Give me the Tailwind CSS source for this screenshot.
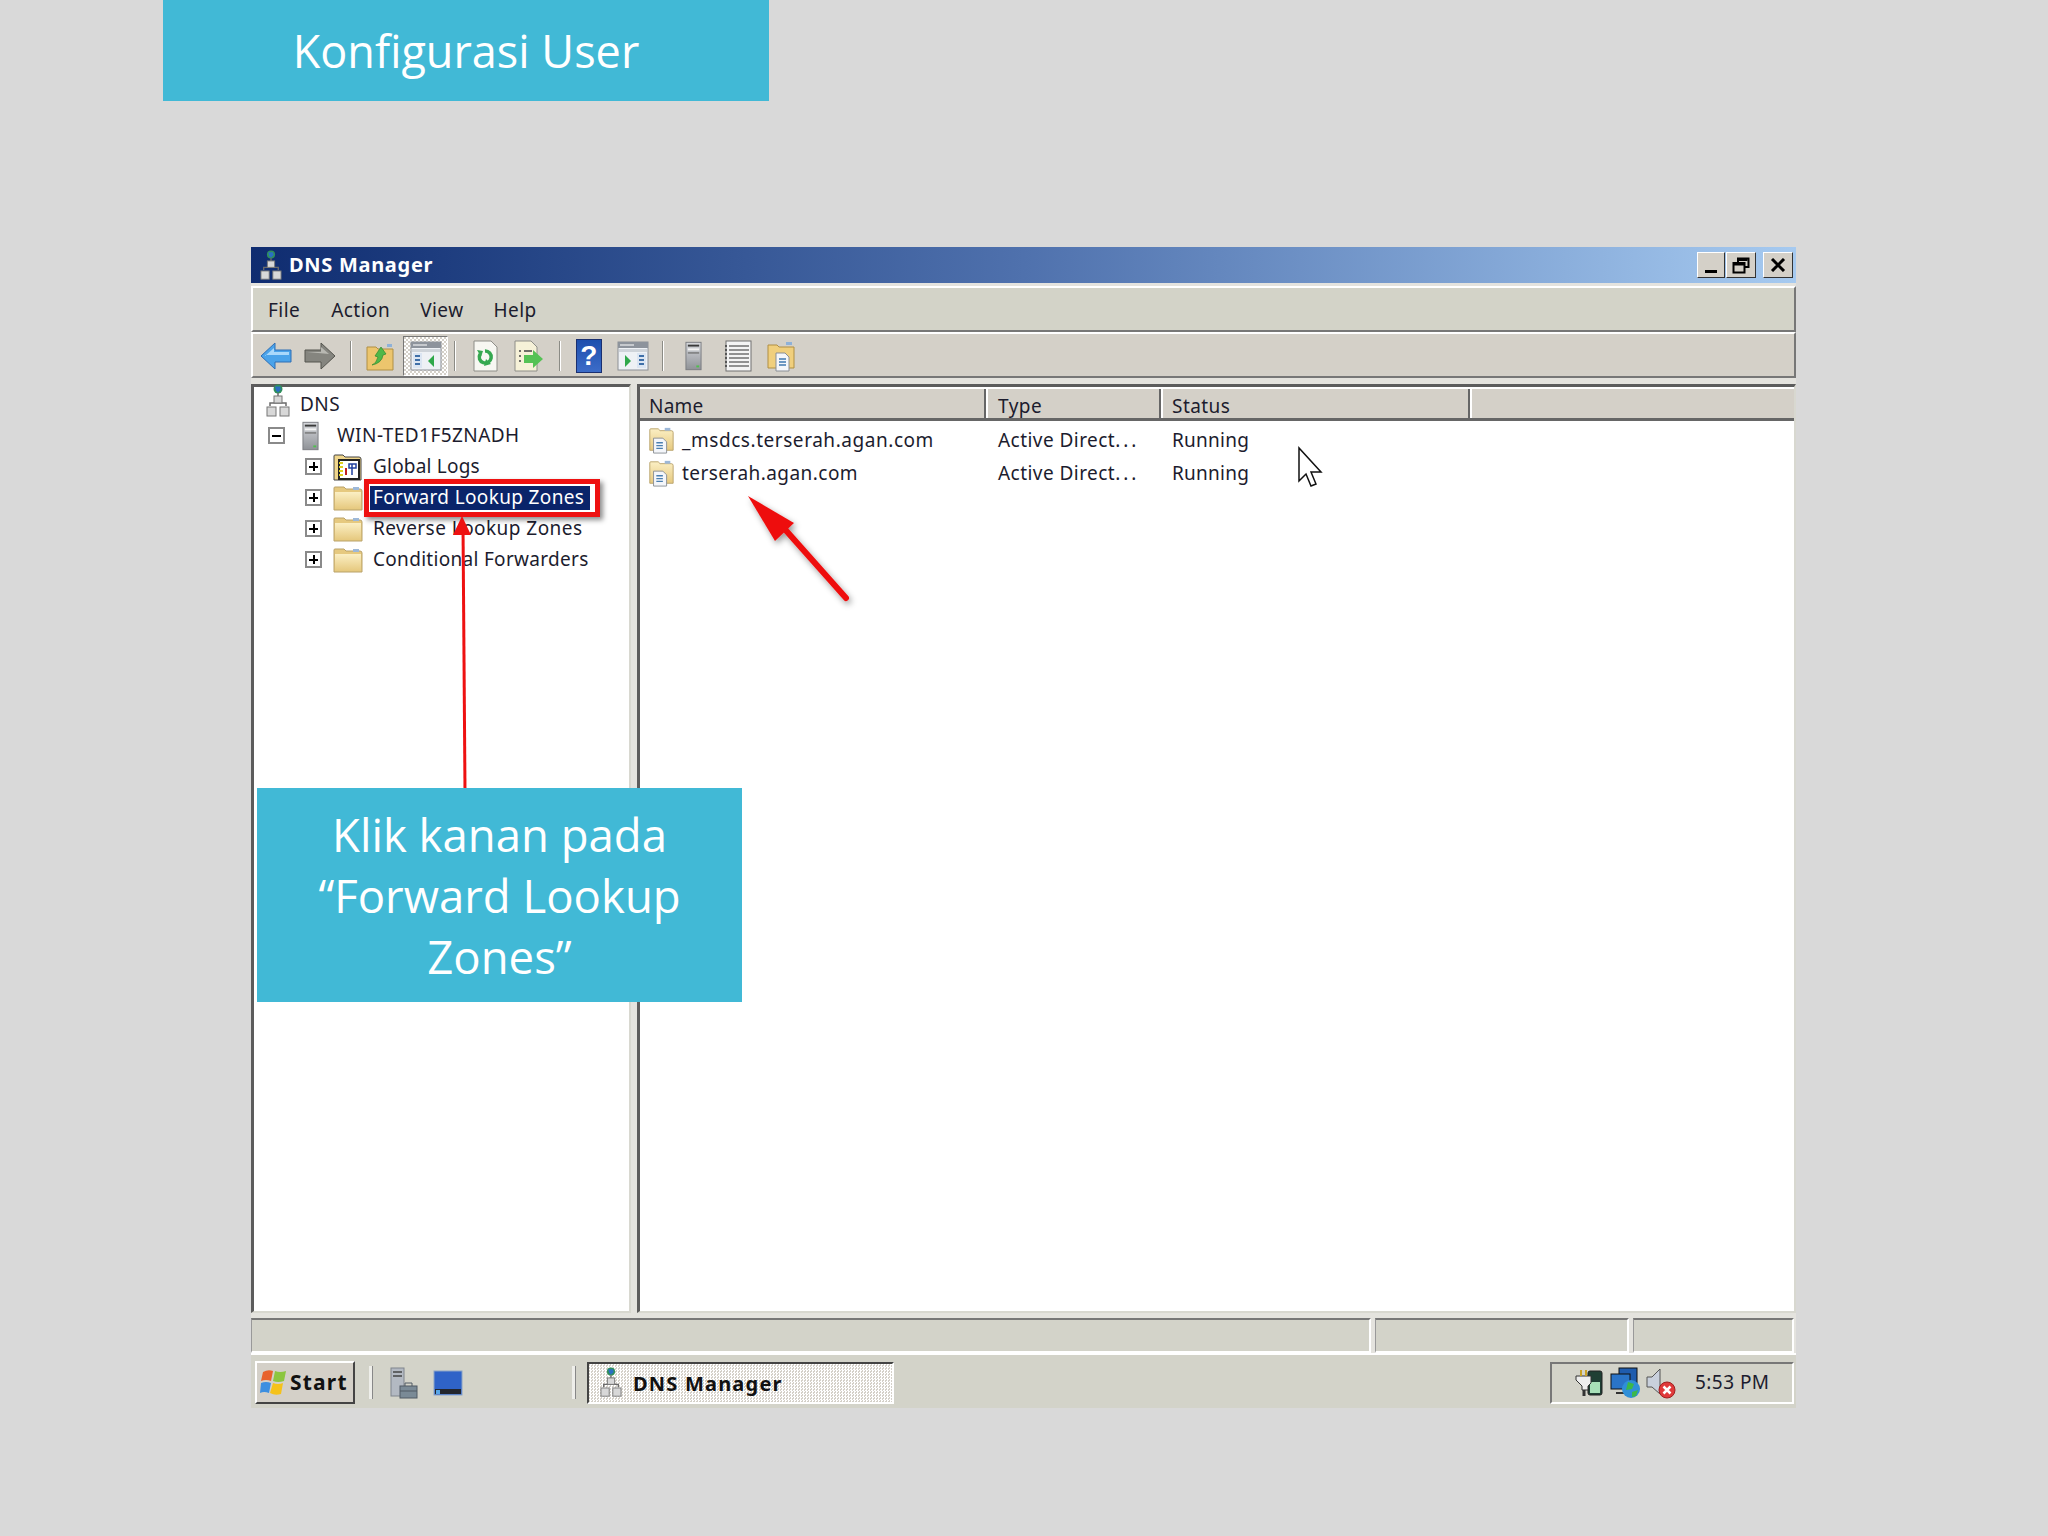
<!DOCTYPE html>
<html lang="en">

<head>
  <meta charset="UTF-8">
  <title>Konfigurasi User</title>
  <script src="https://cdn.jsdelivr.net/npm/@tailwindcss/browser@4"></script>
</head>

<body class="bg-[#d9d9d9] font-['Noto_Sans',sans-serif]">
  <!-- shared icons -->
  <svg width="0" height="0" class="absolute">
    <defs>
      <linearGradient id="fold" x1="0" y1="0" x2="0" y2="1">
        <stop offset="0" stop-color="#fbefc4" />
        <stop offset="1" stop-color="#e6c97f" />
      </linearGradient>
      <linearGradient id="tower" x1="0" y1="0" x2="0" y2="1">
        <stop offset="0" stop-color="#d6d8dc" />
        <stop offset="1" stop-color="#8f9297" />
      </linearGradient>
      <symbol id="dns" viewBox="0 0 24 34">
        <circle cx="12" cy="5" r="4.500" fill="#2f8f5b" />
        <path d="M9 2.500h5l1 3-3 3-2-2z" fill="#2a6fc4" />
        <path d="M12 9v5M4 22v-3h16v3M12 14v5" stroke="#6b6b6b" stroke-width="1.500" fill="none" />
        <rect x="8" y="12" width="8" height="7" fill="#d8d8d8" stroke="#777" />
        <rect x="1" y="23" width="9" height="9" fill="#d8d8d8" stroke="#777" />
        <rect x="14" y="23" width="9" height="9" fill="#d8d8d8" stroke="#777" />
      </symbol>
      <symbol id="server" viewBox="0 0 18 30">
        <rect x="1" y="0.500" width="16" height="29" fill="url(#tower)" stroke="#7a7c80" />
        <rect x="3" y="3" width="12" height="2" fill="#3a3a3a" />
        <rect x="3" y="7" width="12" height="2" fill="#f4f4f4" />
        <rect x="3" y="11" width="12" height="1.500" fill="#777" />
        <rect x="12" y="25" width="3" height="2" fill="#4ec04e" />
      </symbol>
      <symbol id="folder" viewBox="0 0 30 26">
        <path d="M1 25V3q0-1 1-1h9l2 2h14q2 0 2 2v19z" fill="#e6c97f" stroke="#b9a26a" />
        <path d="M2 7h26v17H2z" fill="url(#fold)" />
        <rect x="20" y="2" width="6" height="3" fill="#9db8d8" />
      </symbol>
      <symbol id="zone" viewBox="0 0 30 30">
        <path d="M3 26V4q0-1 1-1h8l2 2h12q2 0 2 2v19z" fill="url(#fold)" stroke="#b9a26a" />
        <rect x="19" y="2" width="6" height="3" fill="#9db8d8" />
        <path d="M7 13h10l4 4v12H7z" fill="#f4f6fa" stroke="#8a8f96" />
        <path d="M10 18h7M10 21h7M10 24h7" stroke="#4a7fb0" stroke-width="1.500" />
      </symbol>
      <symbol id="pane" viewBox="0 0 32 30">
        <rect x="1" y="1" width="30" height="28" fill="#eef1f5" stroke="#8b8f96" />
        <rect x="1" y="1" width="30" height="6" fill="#8d939c" />
        <path d="M3 4h14" stroke="#fff" />
        <rect x="2" y="8" width="28" height="3" fill="#cfd4da" />
      </symbol>
    </defs>
  </svg>

  <div class="relative w-[2048px] h-[1536px] overflow-hidden">
    <!-- slide title -->
    <div class="ml-[163px] w-[606px] h-[101px] bg-[#41b9d6] flex items-center justify-center text-white text-[45px] font-['Open_Sans',sans-serif]">
      Konfigurasi User</div>

    <!-- DNS Manager window -->
    <div class="ml-[251px] mt-[146px] w-[1545px] h-[1161px] flex flex-col bg-[#e4e3de] text-[#1c1c2e] text-[19px] tracking-[0.45px]">
      <div class="h-[36px] shrink-0 flex items-center bg-gradient-to-r from-[#0f2c70] via-[#4f71ad] to-[#a6caf0]">
        <svg class="ml-[9px] w-[22px] h-[31px]"><use href="#dns" /></svg>
        <span class="ml-[7px] text-white font-bold text-[20px] tracking-[0.7px]">DNS Manager</span>
        <div class="ml-auto mr-[3px] flex gap-[3px]">
          <div class="w-[28px] h-[26px] bg-[#d4d0c8] border border-t-white border-l-white border-r-[#333] border-b-[#333] flex items-end justify-center pb-[4px]">
            <div class="w-[12px] h-[3px] bg-black"></div>
          </div>
          <div class="w-[30px] h-[26px] -ml-[2px] bg-[#d4d0c8] border border-t-white border-l-white border-r-[#333] border-b-[#333] flex items-center justify-center">
            <svg width="18" height="17" viewBox="0 0 18 17" fill="none" stroke="#000" stroke-width="2">
              <path d="M6 5V1.500h10.500V10H13" />
              <path d="M5.500 2.500h10" stroke-width="3" />
              <rect x="1.500" y="6" width="11" height="9.500" />
              <path d="M1.500 7h11" stroke-width="3" />
            </svg>
          </div>
          <div class="ml-[4px] w-[30px] h-[26px] bg-[#d4d0c8] border border-t-white border-l-white border-r-[#333] border-b-[#333] flex items-center justify-center">
            <svg width="16" height="14" viewBox="0 0 16 14" stroke="#000" stroke-width="3" fill="none">
              <path d="M2 1l12 12M14 1L2 13" />
            </svg>
          </div>
        </div>
      </div>

      <!-- menu bar -->
      <div class="mt-[3px] h-[46px] shrink-0 flex items-center pt-[2px] bg-[#d3d3c8] border-t-2 border-t-white border-b-2 border-b-[#777] border-l-2 border-l-white border-r-2 border-r-[#777]">
        <span class="ml-[15px]">File</span>
        <span class="ml-[31px]">Action</span>
        <span class="ml-[30px]">View</span>
        <span class="ml-[30px]">Help</span>
      </div>

      <!-- toolbar -->
      <div class="h-[46px] shrink-0 flex items-center pt-[2px] bg-[#d4d0c8] border-t-2 border-t-white border-b-2 border-b-[#777] border-l-2 border-l-white border-r-2 border-r-[#777]">
        <svg class="ml-[7px]" width="32" height="28" viewBox="0 0 32 28">
          <path d="M1 14L15 1v7h16v12H15v7z" fill="#4aa3ea" stroke="#2f6fb5" />
          <path d="M5 14L14 6v4h15v3H5z" fill="#a9d8fb" />
        </svg>
        <svg class="ml-[12px]" width="32" height="28" viewBox="0 0 32 28">
          <path d="M31 14L17 1v7H1v12h16v7z" fill="#85857f" stroke="#55554f" />
          <path d="M3 10h14V5l8 7z" fill="#b8b8b2" />
        </svg>
        <div class="ml-[14px] w-[2px] h-[30px] bg-[#8b8b85] border-r border-white"></div>
        <svg class="ml-[14px]" width="28" height="30" viewBox="0 0 28 30">
          <path d="M1 29V6h9l2 2h15v21z" fill="#ecc56d" stroke="#b08f45" />
          <path d="M6 24q4-1 6-8l-3-1 6-9 5 7-3 1q-1 8-11 10z" fill="#4fb848" stroke="#2c8a2c" stroke-width="0.700" />
          <rect x="21" y="3" width="5" height="3" fill="#8eb1d8" />
        </svg>
        <div class="ml-[9px] w-[45px] h-[40px] flex items-center justify-center border border-t-[#777] border-l-[#777] border-r-white border-b-white bg-[repeating-conic-gradient(#ffffff_0_25%,#d4d0c8_0_50%)] bg-[length:4px_4px]">
          <svg width="32" height="30" viewBox="0 0 32 30">
            <use href="#pane" />
            <rect x="3" y="12" width="9" height="15" fill="#dbe5f2" />
            <path d="M5 15h5M5 19h5M5 23h5" stroke="#3f6fa8" stroke-width="2" />
            <path d="M24 14v12l-6-6z" fill="#2fa84a" />
          </svg>
        </div>
        <div class="ml-[6px] w-[2px] h-[30px] bg-[#8b8b85] border-r border-white"></div>
        <svg class="ml-[17px]" width="25" height="32" viewBox="0 0 25 32">
          <path d="M1 1h17l6 6v24H1z" fill="#f7f7f2" stroke="#8e8e88" />
          <path d="M12 11a6 6 0 1 1-5 3" fill="none" stroke="#35a850" stroke-width="3.500" />
          <path d="M4 10l6 1-2 6zM11 26l2-7 5 5z" fill="#35a850" />
        </svg>
        <svg class="ml-[16px]" width="31" height="32" viewBox="0 0 31 32">
          <path d="M1 1h16l6 6v24H1z" fill="#f6f1d8" stroke="#8e8e88" />
          <path d="M5 11h2M5 16h2M5 21h2M10 11h8" stroke="#444" stroke-width="1.500" />
          <path d="M10 15h9v-5l10 9-10 9v-5h-9z" fill="#55c255" />
        </svg>
        <div class="ml-[14px] w-[2px] h-[30px] bg-[#8b8b85] border-r border-white"></div>
        <div class="ml-[15px] w-[26px] h-[34px] bg-gradient-to-b from-[#1d4fae] to-[#3c6cc8] border border-[#1a2f70] flex items-center justify-center text-white font-bold text-[28px] leading-none font-['Liberation_Sans',sans-serif]">?</div>
        <svg class="ml-[15px]" width="32" height="30" viewBox="0 0 32 30">
          <use href="#pane" />
          <rect x="20" y="12" width="9" height="15" fill="#dbe5f2" />
          <path d="M22 15h5M22 19h5M22 23h5" stroke="#3f6fa8" stroke-width="2" />
          <path d="M8 14v12l6-6z" fill="#2fa84a" />
        </svg>
        <div class="ml-[13px] w-[2px] h-[30px] bg-[#8b8b85] border-r border-white"></div>
        <svg class="ml-[21px] w-[17px] h-[34px]"><use href="#server" /></svg>
        <svg class="ml-[22px]" width="28" height="32" viewBox="0 0 28 32">
          <rect x="2" y="1" width="25" height="30" fill="#f4f4f4" stroke="#707070" />
          <path d="M5 6h20M5 10h20M5 14h20M5 18h20M5 22h20M5 26h20" stroke="#707070" stroke-width="1.500" />
          <path d="M2 5v24" stroke="#555" stroke-width="2" stroke-dasharray="2 2" />
        </svg>
        <svg class="ml-[15px]" width="28" height="32" viewBox="0 0 28 32">
          <path d="M1 28V5h9l2 2h15v21z" fill="#f0cf7d" stroke="#b08f45" />
          <rect x="19" y="2" width="6" height="3" fill="#8eb1d8" />
          <path d="M9 13h9l4 4v14H9z" fill="#f4f6fa" stroke="#8a8f96" />
          <path d="M12 19h7M12 22h7M12 25h7" stroke="#3f78b0" stroke-width="1.500" />
        </svg>
      </div>

      <!-- panes -->
      <div class="mt-[6px] h-[929px] shrink-0 flex gap-[6px]">
        <div class="w-[380px] bg-white border-t-[3px] border-t-[#5c5c5c] border-l-[3px] border-l-[#5c5c5c] border-b-2 border-b-[#d8d8d0] border-r-2 border-r-[#d8d8d0] pt-[2px]">
          <div class="h-[31px] flex items-center">
            <svg class="ml-[12px] w-[24px] h-[34px] -mt-[8px]"><use href="#dns" /></svg>
            <span class="ml-[10px]">DNS</span>
          </div>
          <div class="h-[31px] flex items-center">
            <div class="ml-[14px] w-[17px] h-[17px] border-2 border-[#8a8a8a] flex items-center justify-center">
              <div class="w-[9px] h-[2px] bg-black"></div>
            </div>
            <svg class="ml-[17px] w-[17px] h-[30px]"><use href="#server" /></svg>
            <span class="ml-[18px]">WIN-TED1F5ZNADH</span>
          </div>
          <div class="h-[31px] flex items-center">
            <div class="relative ml-[51px] w-[17px] h-[17px] border-2 border-[#8a8a8a] flex items-center justify-center">
              <div class="w-[9px] h-[2px] bg-black"></div>
              <div class="absolute w-[2px] h-[9px] bg-black"></div>
            </div>
            <svg class="ml-[11px] w-[30px] h-[30px]" viewBox="0 0 30 30">
              <path d="M1 28V4q0-1 1-1h8l2 2h14q2 0 2 2v21z" fill="#f0d68c" stroke="#444" />
              <rect x="6" y="8" width="20" height="19" fill="#fff" stroke="#222" stroke-width="2" />
              <path d="M8 10v15" stroke="#e0d020" stroke-width="4" stroke-dasharray="2 2" />
              <path d="M16 12h7v4h-7zM19 12v11" stroke="#2040a0" stroke-width="1.500" fill="none" />
              <path d="M13 16v7" stroke="#c02020" stroke-width="2" />
            </svg>
            <span class="ml-[10px] tracking-[0.2px]">Global Logs</span>
          </div>
          <div class="h-[31px] flex items-center">
            <div class="relative ml-[51px] w-[17px] h-[17px] border-2 border-[#8a8a8a] flex items-center justify-center">
              <div class="w-[9px] h-[2px] bg-black"></div>
              <div class="absolute w-[2px] h-[9px] bg-black"></div>
            </div>
            <svg class="ml-[11px] w-[30px] h-[26px]"><use href="#folder" /></svg>
            <span class="ml-[7px] pl-[3px] pr-[3px] h-[24px] w-[220px] flex items-center bg-[#0a246a] text-white tracking-[0.35px]">Forward Lookup Zones</span>
          </div>
          <div class="h-[31px] flex items-center">
            <div class="relative ml-[51px] w-[17px] h-[17px] border-2 border-[#8a8a8a] flex items-center justify-center">
              <div class="w-[9px] h-[2px] bg-black"></div>
              <div class="absolute w-[2px] h-[9px] bg-black"></div>
            </div>
            <svg class="ml-[11px] w-[30px] h-[26px]"><use href="#folder" /></svg>
            <span class="ml-[10px]">Reverse Lookup Zones</span>
          </div>
          <div class="h-[31px] flex items-center">
            <div class="relative ml-[51px] w-[17px] h-[17px] border-2 border-[#8a8a8a] flex items-center justify-center">
              <div class="w-[9px] h-[2px] bg-black"></div>
              <div class="absolute w-[2px] h-[9px] bg-black"></div>
            </div>
            <svg class="ml-[11px] w-[30px] h-[26px]"><use href="#folder" /></svg>
            <span class="ml-[10px] tracking-[0.3px]">Conditional Forwarders</span>
          </div>
        </div>

        <div class="flex-1 bg-white border-t-[3px] border-t-[#5c5c5c] border-l-[3px] border-l-[#5c5c5c] border-b-2 border-b-[#d8d8d0] border-r-2 border-r-[#d8d8d0]">
          <div class="h-[34px] flex bg-[#d4d0c8] border-t-2 border-t-white border-b-[3px] border-b-[#666]">
            <div class="w-[346px] pl-[9px] pt-[6px] border-r-2 border-r-[#666] flex items-center tracking-[0.2px]">Name</div>
            <div class="w-[175px] pl-[10px] pt-[6px] border-l-2 border-l-white border-r-2 border-r-[#666] flex items-center">Type</div>
            <div class="w-[309px] pl-[9px] pt-[6px] border-l-2 border-l-white border-r-2 border-r-[#666] flex items-center">Status</div>
            <div class="flex-1 border-l-2 border-l-white"></div>
          </div>
          <div class="mt-[2px] h-[33px] flex items-center">
            <svg class="ml-[7px] w-[28px] h-[28px]"><use href="#zone" /></svg>
            <span class="ml-[7px] w-[316px] tracking-[0.55px] pt-[1px]">_msdcs.terserah.agan.com</span>
            <span class="w-[174px] whitespace-pre pt-[1px]">Active Direct<span class="tracking-[3px]">...</span></span>
            <span class="tracking-[0.25px] pt-[1px]">Running</span>
          </div>
          <div class="h-[33px] flex items-center">
            <svg class="ml-[7px] w-[28px] h-[28px]"><use href="#zone" /></svg>
            <span class="ml-[7px] w-[316px] pt-[1px]">terserah.agan.com</span>
            <span class="w-[174px] whitespace-pre pt-[1px]">Active Direct<span class="tracking-[3px]">...</span></span>
            <span class="tracking-[0.25px] pt-[1px]">Running</span>
          </div>
        </div>
      </div>

      <!-- status bar -->
      <div class="mt-[5px] h-[35px] shrink-0 flex gap-[4px] bg-[#e4e3de]">
        <div class="w-[1120px] bg-[#d3d3c9] border-t-2 border-t-[#777] border-l border-l-[#999] border-r-2 border-r-white border-b-2 border-b-white"></div>
        <div class="w-[254px] bg-[#d3d3c9] border-t-2 border-t-[#777] border-l border-l-[#999] border-r-2 border-r-white border-b-2 border-b-white"></div>
        <div class="flex-1 mr-[2px] bg-[#d3d3c9] border-t-2 border-t-[#777] border-l border-l-[#999] border-r-2 border-r-white border-b-2 border-b-white"></div>
      </div>

      <!-- taskbar -->
      <div class="flex-1 flex items-center pt-[2px] bg-[#d3d3c9] border-t-2 border-t-white">
        <div class="ml-[4px] w-[100px] h-[43px] flex items-center bg-[#d4d0c8] border-2 border-t-white border-l-white border-r-[#444] border-b-[#444]">
          <svg class="ml-[3px]" width="28" height="30" viewBox="0 0 28 30">
            <path d="M3 4q5-3 10-1l-2 10q-5-2-10 0z" fill="#e8622c" />
            <path d="M15 3q5 2 11 0l-2 10q-6 2-11 0z" fill="#8cc63f" />
            <path d="M1 15q5-2 10 0l-2 10q-5-2-9 0z" fill="#3c8fe0" />
            <path d="M13 15q5 2 10 0l-2 11q-6 2-11-1z" fill="#f5c21a" />
          </svg>
          <span class="ml-[2px] font-bold text-[21px] text-[#111] tracking-[1.200px]">Start</span>
        </div>
        <div class="ml-[14px] w-[4px] h-[33px] bg-[#eeeeea] border-r border-r-[#888]"></div>
        <svg class="ml-[15px]" width="30" height="32" viewBox="0 0 30 32">
          <rect x="3" y="1" width="13" height="28" fill="#b3b9c2" stroke="#80868e" />
          <path d="M5 5h9M5 9h9" stroke="#444" stroke-width="1.500" />
          <rect x="12" y="19" width="17" height="12" fill="#7a8a96" stroke="#505a64" />
          <path d="M17 19v-3h7v3M12 24h17" stroke="#505a64" fill="none" />
        </svg>
        <svg class="ml-[15px]" width="30" height="28" viewBox="0 0 30 28">
          <rect x="1" y="2" width="28" height="24" fill="#2f63c8" stroke="#8aa4c8" />
          <rect x="2" y="20" width="26" height="5" fill="#23262e" />
          <rect x="3" y="21" width="4" height="4" fill="#59a7e8" />
        </svg>
        <div class="ml-[109px] w-[4px] h-[33px] bg-[#eeeeea] border-r border-r-[#888]"></div>
        <div class="ml-[11px] w-[307px] h-[42px] flex items-center border-2 border-t-[#444] border-l-[#444] border-r-white border-b-white bg-[repeating-conic-gradient(#ffffff_0_25%,#d4d0c8_0_50%)] bg-[length:3px_3px]">
          <svg class="ml-[11px] w-[22px] h-[31px]"><use href="#dns" /></svg>
          <span class="ml-[11px] font-bold text-[20px] text-[#111] tracking-[1.200px] pt-[2px]">DNS Manager</span>
        </div>
        <div class="ml-auto mr-[2px] w-[244px] h-[42px] flex items-center border-2 border-t-[#777] border-l-[#777] border-r-white border-b-white">
          <svg class="ml-[23px]" width="29" height="30" viewBox="0 0 29 30">
            <rect x="13" y="3" width="14" height="24" rx="2" fill="#1f3f34" stroke="#222" />
            <rect x="15" y="14" width="10" height="11" fill="#a8e0b8" />
            <path d="M1 8h15v7l-3 3v4H7v-4L1 12z" fill="#eee" stroke="#333" />
            <path d="M6 2v6M11 2v6" stroke="#c9a227" stroke-width="2" />
            <path d="M9 22v6" stroke="#333" stroke-width="3" />
          </svg>
          <svg class="ml-[6px]" width="31" height="32" viewBox="0 0 31 32">
            <rect x="9" y="1" width="18" height="15" fill="#1f5cae" stroke="#111" />
            <rect x="1" y="7" width="19" height="15" fill="#2a74c8" stroke="#111" />
            <path d="M6 26h12" stroke="#333" stroke-width="2" />
            <circle cx="21" cy="22" r="9" fill="#2f8fd8" />
            <path d="M18 15l6 2-2 5-6 1zM22 25l6-2-2 6-4 1z" fill="#3cb84a" />
          </svg>
          <svg class="ml-[5px]" width="31" height="32" viewBox="0 0 31 32">
            <path d="M1 10h5l8-8v25l-8-7H1z" fill="#c9d0dc" stroke="#555" />
            <circle cx="21" cy="23" r="8" fill="#e03a3a" stroke="#a02020" />
            <path d="M17.500 19.500l7 7M24.500 19.500l-7 7" stroke="#fff" stroke-width="2.500" />
          </svg>
          <span class="ml-[18px] text-[19px]">5:53 PM</span>
        </div>
      </div>
    </div>

    <!-- annotations over the screenshot -->
    <div class="absolute left-[364px] top-[479px] w-[236px] h-[38px] border-[5px] border-[#ee1111] shadow-[3px_3px_5px_rgba(0,0,0,0.45)]"></div>
    <svg class="absolute inset-0" width="2048" height="1536" viewBox="0 0 2048 1536" fill="none">
      <defs>
        <filter id="soft" x="-40%" y="-40%" width="180%" height="180%">
          <feDropShadow dx="2" dy="3" stdDeviation="3" flood-color="#000" flood-opacity="0.4" />
        </filter>
      </defs>
      <path d="M465 790L463 525" stroke="#ee1111" stroke-width="3" />
      <path d="M462 516l9 19h-18z" fill="#ee1111" />
      <g filter="url(#soft)">
        <path d="M846 598L782 526" stroke="#ee1111" stroke-width="6" stroke-linecap="round" />
        <path d="M748 496L794 523L775 541z" fill="#ee1111" />
      </g>
      <path d="M1299 448v33l7-7 5 12 5-2-5-12h10z" fill="#fff" stroke="#111" stroke-width="1.500" />
    </svg>
    <div class="absolute left-[257px] top-[788px] w-[485px] h-[214px] bg-[#41b9d6] flex items-center justify-center text-center text-white text-[45.500px] leading-[61px] font-['Open_Sans',sans-serif]">
      Klik kanan pada<br>“Forward Lookup<br>Zones”</div>
  </div>
</body>

</html>
